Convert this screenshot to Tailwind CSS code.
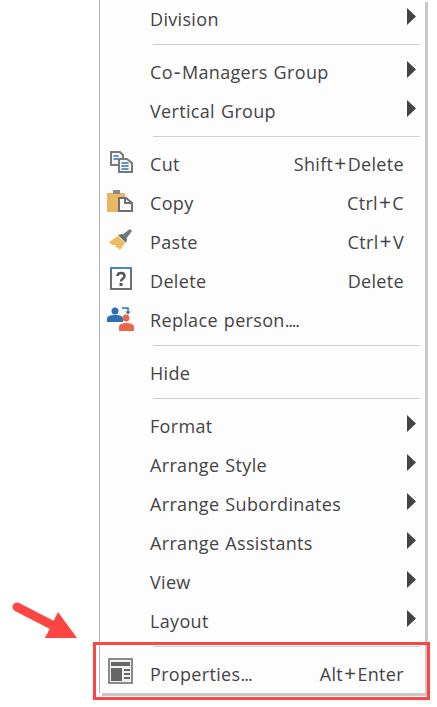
<!DOCTYPE html>
<html lang="en">
<head>
  <meta charset="UTF-8" />
  <title>Context menu</title>
  <script src="https://cdn.jsdelivr.net/npm/@tailwindcss/browser@4"></script>
</head>
<body class="bg-white">
  <div class="relative w-[437px] h-[707px] overflow-hidden font-['Open_Sans',sans-serif] text-[18px] text-[#444] tracking-[0.33px] [word-spacing:1px]">

    <!-- menu -->
    <div class="absolute left-[99px] top-[-1px] w-[326px] h-[694px] bg-[#fdfdfd] border-l border-[#b4b4b4] shadow-[3px_3px_0_#c8c8c8]">

      <div class="flex items-center h-[39px] pt-[2px] pl-[50px] pr-[9px]"><span class="flex-1">Division</span><svg class="w-[9px] h-[17px] mb-[6px]" viewBox="0 0 9 17"><path d="M0 0L9 8.500L0 17Z" fill="#444"/></svg></div>
      <div class="h-[14px] pt-[6px] pl-[53px] pr-[5px]"><div class="h-px w-full bg-[#d0d0d0]"></div></div>

      <div class="flex items-center h-[39px] pt-[2px] pl-[50px] pr-[9px]"><span class="flex-1">Co<span class="mx-[1px] text-[21px] leading-none">-</span>Managers Group</span><svg class="w-[9px] h-[17px] mb-[6px]" viewBox="0 0 9 17"><path d="M0 0L9 8.500L0 17Z" fill="#444"/></svg></div>
      <div class="flex items-center h-[39px] pt-[2px] pl-[50px] pr-[9px]"><span class="flex-1">Vertical Group</span><svg class="w-[9px] h-[17px] mb-[6px]" viewBox="0 0 9 17"><path d="M0 0L9 8.500L0 17Z" fill="#444"/></svg></div>
      <div class="h-[14px] pt-[6px] pl-[53px] pr-[5px]"><div class="h-px w-full bg-[#d0d0d0]"></div></div>

      <div class="relative flex items-center h-[39px] pt-[2px] pl-[50px] pr-[21px]">
        <svg class="absolute left-[10px] top-[7px] w-[23px] h-[22px]" viewBox="0 0 23 22" fill="none"><path d="M1 1h9l3 3v10H1z" fill="#f4f4f4" stroke="#7a7a7a" stroke-width="2"/><path d="M3.500 5h5M3.500 8h5" stroke="#2e75b6" stroke-width="1.500"/><path d="M9 8h8l5 4v9H9z" fill="#f4f4f4" stroke="#7a7a7a" stroke-width="2"/><path d="M11.500 12h7M11.500 15h7M11.500 18h7" stroke="#2e75b6" stroke-width="1.500"/></svg>
        <span class="flex-1">Cut</span><span>Shift<span class="mx-[1px] text-[21px] leading-none">+</span>Delete</span>
      </div>
      <div class="relative flex items-center h-[39px] pt-[2px] pl-[50px] pr-[21px]">
        <svg class="absolute left-[7px] top-[7px] w-[26px] h-[22px]" viewBox="0 0 26 22" fill="none"><path d="M0 3h6V1h7v2h5v5h-7v14H0z" fill="#e9b75f"/><path d="M6 0h7v4H6z" fill="#8a8a8a"/><path d="M12 8h7l6 5v8H12z" fill="#fff" stroke="#6f6f6f" stroke-width="2"/><path d="M18 8v5h7" stroke="#6f6f6f" stroke-width="2"/></svg>
        <span class="flex-1">Copy</span><span>Ctrl<span class="mx-[1px] text-[21px] leading-none">+</span>C</span>
      </div>
      <div class="relative flex items-center h-[39px] pt-[2px] pl-[50px] pr-[21px]">
        <svg class="absolute left-[9px] top-[6px] w-[26px] h-[23px]" viewBox="0 0 26 23" fill="none"><path d="M0 14l9-6 7 7-5 7-3-3-1 1-1-3-3 0z" fill="#eebb60"/><path d="M9 7l4-1 5 5-1 4z" fill="#6a6a6a"/><path d="M13 7l8-6 2 2-6 8z" fill="#777"/></svg>
        <span class="flex-1">Paste</span><span>Ctrl<span class="mx-[1px] text-[21px] leading-none">+</span>V</span>
      </div>
      <div class="relative flex items-center h-[39px] pt-[2px] pl-[50px] pr-[21px]">
        <svg class="absolute left-[10px] top-[6px] w-[22px] h-[23px]" viewBox="0 0 22 23" fill="none"><rect x="1" y="1" width="20" height="21" fill="#fff" stroke="#6f6f6f" stroke-width="2"/><path d="M0 1h22" stroke="#4a86c5" stroke-width="2"/><path d="M7.500 9c0-4 7-4 7 0 0 3-3.500 2.500-3.500 5.500" stroke="#555" stroke-width="2.500"/><path d="M9.500 16h3v3h-3z" fill="#555"/></svg>
        <span class="flex-1">Delete</span><span>Delete</span>
      </div>
      <div class="relative flex items-center h-[39px] pt-[2px] pl-[50px] pr-[21px]">
        <svg class="absolute left-[7px] top-[6px] w-[28px] h-[26px]" viewBox="0 0 28 26" fill="none"><circle cx="8" cy="5" r="3.500" fill="#2c6fb5"/><path d="M0 16v-3c0-3 3-4 8-4s8 1 8 4v3z" fill="#2c6fb5"/><circle cx="19" cy="12" r="3.500" fill="#e8694a"/><path d="M12 25v-4c0-3 3-4 7-4s8 1 8 4v4z" fill="#e8694a"/><path d="M15 2h6v4" stroke="#2c6fb5" stroke-width="1.500"/><path d="M18.500 5.500l2.500 3 2.500-3z" fill="#2c6fb5"/></svg>
        <span class="flex-1">Replace person<span class="tracking-[-1.2px]">....</span></span>
      </div>
      <div class="h-[14px] pt-[6px] pl-[53px] pr-[5px]"><div class="h-px w-full bg-[#d0d0d0]"></div></div>

      <div class="flex items-center h-[39px] pt-[2px] pl-[50px] pr-[9px]"><span class="flex-1">Hide</span></div>
      <div class="h-[14px] pt-[6px] pl-[53px] pr-[5px]"><div class="h-px w-full bg-[#d0d0d0]"></div></div>

      <div class="flex items-center h-[39px] pt-[2px] pl-[50px] pr-[9px]"><span class="flex-1">Format</span><svg class="w-[9px] h-[17px] mb-[6px]" viewBox="0 0 9 17"><path d="M0 0L9 8.500L0 17Z" fill="#444"/></svg></div>
      <div class="flex items-center h-[39px] pt-[2px] pl-[50px] pr-[9px]"><span class="flex-1">Arrange Style</span><svg class="w-[9px] h-[17px] mb-[6px]" viewBox="0 0 9 17"><path d="M0 0L9 8.500L0 17Z" fill="#444"/></svg></div>
      <div class="flex items-center h-[39px] pt-[2px] pl-[50px] pr-[9px]"><span class="flex-1">Arrange Subordinates</span><svg class="w-[9px] h-[17px] mb-[6px]" viewBox="0 0 9 17"><path d="M0 0L9 8.500L0 17Z" fill="#444"/></svg></div>
      <div class="flex items-center h-[39px] pt-[2px] pl-[50px] pr-[9px]"><span class="flex-1">Arrange Assistants</span><svg class="w-[9px] h-[17px] mb-[6px]" viewBox="0 0 9 17"><path d="M0 0L9 8.500L0 17Z" fill="#444"/></svg></div>
      <div class="flex items-center h-[39px] pt-[2px] pl-[50px] pr-[9px]"><span class="flex-1">View</span><svg class="w-[9px] h-[17px] mb-[6px]" viewBox="0 0 9 17"><path d="M0 0L9 8.500L0 17Z" fill="#444"/></svg></div>
      <div class="flex items-center h-[39px] pt-[2px] pl-[50px] pr-[9px]"><span class="flex-1">Layout</span><svg class="w-[9px] h-[17px] mb-[6px]" viewBox="0 0 9 17"><path d="M0 0L9 8.500L0 17Z" fill="#444"/></svg></div>
      <div class="h-[14px] pt-[6px] pl-[53px] pr-[5px]"><div class="h-px w-full bg-[#d0d0d0]"></div></div>

      <div class="relative flex items-center h-[39px] pt-[2px] pl-[50px] pr-[21px]">
        <svg class="absolute left-[8px] top-[4px] w-[25px] h-[26px]" viewBox="0 0 25 26" fill="none"><rect x="1" y="1" width="23" height="24" fill="#f0f0f0" stroke="#8a8a8a" stroke-width="2"/><path d="M3 4h19v4H3z" fill="#666"/><path d="M3 10h11v13H3z" fill="#666"/><path d="M16 12h6M16 16h6M16 20h6" stroke="#666" stroke-width="2"/></svg>
        <span class="flex-1">Properties<span class="tracking-[-1px]">...</span></span><span>Alt<span class="mx-[1px] text-[21px] leading-none">+</span>Enter</span>
      </div>
    </div>

    <!-- annotation -->
    <div class="absolute left-[93px] top-[642px] w-[337px] h-[58px] border-[3px] border-[#ff4444]"></div>
    <svg class="absolute left-[12px] top-[602px] w-[68px] h-[38px]" viewBox="0 0 68 38" fill="none"><path d="M5 5L40 23" stroke="#ff4444" stroke-width="9" stroke-linecap="round"/><path d="M46 10L65 36H33z" fill="#ff4444"/></svg>
  </div>
</body>
</html>
